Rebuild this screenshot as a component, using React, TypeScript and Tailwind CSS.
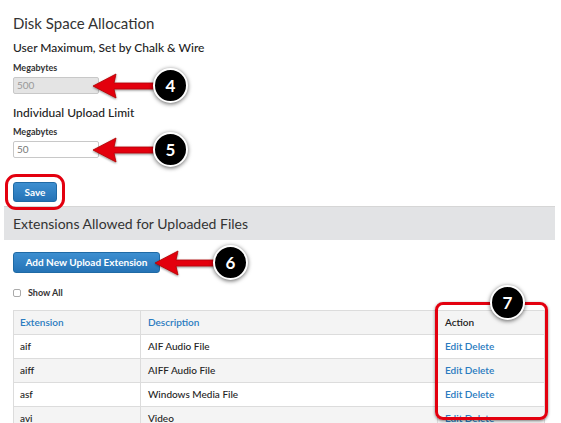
import React from "react";

const rows = [
  { ext: "aif", desc: "AIF Audio File" },
  { ext: "aiff", desc: "AIFF Audio File" },
  { ext: "asf", desc: "Windows Media File" },
  { ext: "avi", desc: "Video" },
];

// red arrow pointing left; tip at left edge
function Arrow({ width, className = "" }: { width: number; className?: string }) {
  const h = 26;
  const mid = h / 2;
  const head = 24;
  return (
    <svg width={width} height={h} viewBox={`0 0 ${width} ${h}`} className={`shrink-0 overflow-visible ${className}`}>
      <defs>
        <filter id="ash" x="-20%" y="-40%" width="140%" height="180%">
          <feDropShadow dx="0" dy="1" stdDeviation="1" floodColor="#000" floodOpacity="0.45" />
        </filter>
      </defs>
      <polygon
        points={`1,${mid} ${head},1 ${head - 2},${mid - 3} ${width},${mid - 3} ${width},${mid + 3} ${head - 2},${mid + 3} ${head},${h - 1}`}
        fill="#e3000f"
        stroke="#b00000"
        strokeWidth="0.8"
        strokeLinejoin="round"
        filter="url(#ash)"
      />
    </svg>
  );
}

function Badge({ n, className = "" }: { n: number; className?: string }) {
  return (
    <div
      className={`flex h-[35px] w-[35px] shrink-0 items-center justify-center rounded-full border-[2.5px] border-white bg-black text-[17px] font-bold text-white shadow-[0_1px_4px_rgba(0,0,0,0.6)] ${className}`}
    >
      {n}
    </div>
  );
}

function Field({ value, disabled, n }: { value: string; disabled?: boolean; n: number }) {
  return (
    <div className="relative z-10 mt-[3px] flex h-[17px] items-center">
      <div
        className={`flex h-[17px] w-[86px] shrink-0 items-center rounded-[2px] border border-[#c8c8c8] px-[3px] text-[10px] ${
          disabled ? "bg-[#e4e4e4] text-[#999]" : "bg-white text-[#777]"
        }`}
      >
        {value}
      </div>
      <Arrow width={64} className="ml-[-7px]" />
      <Badge n={n} className="ml-[-3px]" />
    </div>
  );
}

export default function App() {
  return (
    <div
      className="relative h-[423px] w-[561px] overflow-hidden bg-white text-[#333]"
      style={{ fontFamily: "Lato, 'Open Sans', sans-serif" }}
    >
      <div className="flex flex-col items-start px-[13px] pt-[13px]">
        <h2 className="text-[15px] leading-[20px]">Disk Space Allocation</h2>
        <h3 className="mt-[8px] text-[12px] font-medium leading-[14px] text-[#222]">User Maximum, Set by Chalk &amp; Wire</h3>
        <div className="mt-[7px] text-[9px] font-bold leading-[12px]">Megabytes</div>
        <Field value="500" disabled n={4} />
        <h3 className="mt-[12px] text-[12px] font-medium leading-[14px] text-[#222]">Individual Upload Limit</h3>
        <div className="mt-[6px] text-[9px] font-bold leading-[12px]">Megabytes</div>
        <Field value="50" n={5} />
        <button className="mt-[24px] flex h-[20px] w-[44px] items-center justify-center rounded-[3px] border border-[#1f6aa5] bg-gradient-to-b from-[#3d8fd0] to-[#2573b6] text-[10px] font-bold text-white outline-[3px] outline-offset-[5px] outline-[#e3000f] outline-solid">
          Save
        </button>
      </div>

      <div className="ml-[4px] mt-[4px] flex h-[34px] w-[551px] items-center border-t border-[#d6d6d6] bg-[#e2e3e5] pl-[9px] text-[14px] text-[#333]">
        Extensions Allowed for Uploaded Files
      </div>

      <div className="px-[13px]">
        <div className="mt-[12px] flex h-[21px] items-center">
          <button className="flex h-[21px] w-[147px] shrink-0 items-center justify-center rounded-[3px] border border-[#1f6aa5] bg-gradient-to-b from-[#3d8fd0] to-[#2573b6] text-[10px] font-bold text-white">
            Add New Upload Extension
          </button>
          <Arrow width={62} className="ml-[-6px]" />
          <Badge n={6} className="ml-[-3px]" />
        </div>
        <label className="mt-[14px] flex items-center gap-[7px] text-[9px] font-bold leading-[12px]">
          <span className="inline-block h-[8px] w-[8px] rounded-[2px] border border-[#aaa] bg-white" />
          Show All
        </label>
        <table className="mt-[11px] w-[532px] border-collapse text-[10px]">
          <thead>
            <tr className="h-[24px] bg-[#f4f4f4]">
              <th className="w-[127px] border border-[#dcdcdc] pl-[6px] text-left font-semibold text-[#2a7bc0]">Extension</th>
              <th className="w-[297px] border border-[#dcdcdc] pl-[7px] text-left font-semibold text-[#2a7bc0]">Description</th>
              <th className="border border-[#dcdcdc] pl-[7px] text-left font-semibold text-[#222]">Action</th>
            </tr>
          </thead>
          <tbody>
            {rows.map((r, i) => (
              <tr key={r.ext} className={`h-[24px] ${i % 2 === 1 ? "bg-[#f4f4f4]" : "bg-white"}`}>
                <td className="border border-[#dcdcdc] pl-[6px] font-medium text-[#222]">{r.ext}</td>
                <td className="border border-[#dcdcdc] pl-[7px] font-medium text-[#222]">{r.desc}</td>
                <td className="border border-[#dcdcdc] pl-[7px] font-semibold text-[#2a7bc0]">Edit Delete</td>
              </tr>
            ))}
          </tbody>
        </table>
      </div>

      {/* callout over the Action column */}
      <div className="absolute left-[435px] top-[302px] h-[118px] w-[113px] rounded-[8px] border-[3px] border-[#e3000f] shadow-[0_1px_3px_rgba(0,0,0,0.5)]" />
      <Badge n={7} className="absolute left-[490px] top-[285px]" />
    </div>
  );
}
